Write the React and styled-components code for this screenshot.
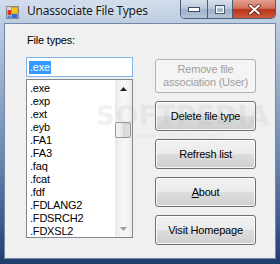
import React from "react";
import styled, { createGlobalStyle } from "styled-components";

const Global = createGlobalStyle`
  html, body { margin: 0; padding: 0; }
  body { width: 280px; height: 264px; overflow: hidden; background: #1f3c6d; }
`;

const Window = styled.div`
  position: relative;
  width: 280px;
  height: 264px;
  display: flex;
  flex-direction: column;
  box-sizing: border-box;
  background: linear-gradient(180deg, #d2deed 0%, #bccbe0 9%, #98aecb 30%, #6a87b0 60%, #3a5a8c 85%, #1f3c6d 100%);
  font-family: "Liberation Sans", Arial, sans-serif;
`;

const TitleBar = styled.div`
  height: 23px;
  display: flex;
  align-items: flex-start;
  padding-left: 6px;
  box-sizing: border-box;
`;

const AppIcon = styled.svg`
  margin-top: 6px;
  flex: none;
`;

const Title = styled.div`
  margin-left: 8px;
  margin-top: 3px;
  font-family: "Noto Sans", "Open Sans", sans-serif;
  font-size: 12px;
  line-height: 16px;
  color: #1a1a1a;
  letter-spacing: -0.25px;
  text-shadow: 0 0 6px rgba(255, 255, 255, 0.9);
`;

const Caption = styled.div`
  margin-left: auto;
  margin-right: 4px;
  display: flex;
  height: 19px;
  border: 1px solid #4a5d78;
  border-top: none;
  border-radius: 0 0 5px 5px;
  overflow: hidden;
  box-sizing: border-box;
`;

const CapButton = styled.div`
  width: ${(p) => p.w}px;
  height: 100%;
  display: flex;
  align-items: center;
  justify-content: center;
  box-sizing: border-box;
  border-left: ${(p) => (p.first ? "none" : "1px solid #4a5d78")};
  background: ${(p) =>
    p.close
      ? "linear-gradient(180deg, #e2a08f 0%, #d0735c 45%, #b8331c 55%, #cf5a3c 100%)"
      : "linear-gradient(180deg, #d7e0ec 0%, #bccadc 45%, #9fb1c9 55%, #b6c6da 100%)"};
`;

const Client = styled.div`
  flex: 1;
  margin: 0 4px 5px 4px;
  background: #f0f0f0;
  border: 1px solid #7288a8;
  box-sizing: border-box;
  display: flex;
  padding: 10px 0 0 21px;
  letter-spacing: -0.2px;
`;

const LeftColumn = styled.div`
  width: 107px;
  display: flex;
  flex-direction: column;
`;

const Label = styled.div`
  font-size: 11px;
  line-height: 13px;
  height: 13px;
  color: #000;
  padding-left: 1px;
`;

const TextBox = styled.div`
  margin-top: 10px;
  height: 20px;
  border: 1px solid #7eb4ea;
  background: #fff;
  box-sizing: border-box;
  display: flex;
  align-items: center;
  padding-left: 2px;
`;

const Selected = styled.span`
  background: #3399ff;
  color: #fff;
  font-size: 11px;
  line-height: 13px;
  padding: 0 1px;
`;

const ListBox = styled.div`
  margin-top: 2px;
  height: 159px;
  border: 1px solid #828790;
  background: #fff;
  box-sizing: border-box;
  display: flex;
`;

const Items = styled.div`
  flex: 1;
  padding: 2px 0 0 3px;
  overflow: hidden;
`;

const Item = styled.div`
  font-size: 11px;
  line-height: 13px;
  height: 13px;
  color: #000;
`;

const ScrollBar = styled.div`
  width: 17px;
  display: flex;
  flex-direction: column;
  background: linear-gradient(90deg, #e8e8e8 0%, #f6f6f6 40%, #f6f6f6 70%, #ebebeb 100%);
`;

const Arrow = styled.div`
  height: 17px;
  display: flex;
  align-items: center;
  justify-content: center;
`;

const Track = styled.div`
  flex: 1;
  display: flex;
  flex-direction: column;
`;

const Thumb = styled.div`
  margin: 25px 1px 0 0;
  height: 16px;
  border: 1px solid #969696;
  border-radius: 2px;
  box-sizing: border-box;
  background: linear-gradient(90deg, #f3f3f3 0%, #e8e8e8 50%, #d6d6d6 51%, #e0e0e0 100%);
`;

const RightColumn = styled.div`
  margin-left: 22px;
  width: 101px;
  padding-top: 25px;
  display: flex;
  flex-direction: column;
  gap: 8px;
`;

const Button = styled.div`
  height: ${(p) => p.h || 30}px;
  box-sizing: border-box;
  border: 1px solid ${(p) => (p.disabled ? "#adb2b5" : "#707070")};
  border-radius: 3px;
  display: flex;
  flex-direction: column;
  align-items: center;
  justify-content: center;
  text-align: center;
  font-size: 11px;
  line-height: 13px;
  color: ${(p) => (p.disabled ? "#a0a0a0" : "#000")};
  background: ${(p) =>
    p.disabled
      ? "#f4f4f4"
      : "linear-gradient(180deg, #f2f2f2 0%, #ebebeb 50%, #dddddd 51%, #cfcfcf 100%)"};
  box-shadow: ${(p) => (p.disabled ? "none" : "inset 0 0 0 1px rgba(255,255,255,0.8)")};
`;

const Key = styled.span`
  text-decoration: underline;
`;

const Watermark = styled.div`
  position: absolute;
  left: 96px;
  top: 104px;
  width: 150px;
  text-align: center;
  pointer-events: none;
  color: rgba(170, 170, 170, 0.18);
  font-family: "DejaVu Sans", sans-serif;
`;

const WaterBig = styled.div`
  font-size: 26px;
  font-weight: bold;
  line-height: 24px;
  letter-spacing: 1px;
`;

const WaterSmall = styled.div`
  font-size: 9px;
  line-height: 11px;
  margin-top: 3px;
  margin-left: 14px;
`;

const files = [".exe", ".exp", ".ext", ".eyb", ".FA1", ".FA3", ".faq", ".fcat", ".fdf", ".FDLANG2", ".FDSRCH2", ".FDXSL2"];

export default function App() {
  return (
    <>
      <Global />
      <Window>
        <TitleBar>
          <AppIcon width="13" height="13" viewBox="0 0 13 13">
            <rect x="0.5" y="0.5" width="12" height="12" fill="#d8d8d8" stroke="#8a8a8a" />
            <rect x="1.5" y="4" width="3.5" height="5" fill="#d83a20" />
            <rect x="5.5" y="1.5" width="6" height="6" fill="#f5c518" stroke="#c08a00" strokeWidth="0.6" />
            <rect x="5.5" y="8" width="6" height="4" fill="#2f6fd0" />
            <rect x="1.5" y="9.5" width="3.5" height="2.5" fill="#4a8de0" />
          </AppIcon>
          <Title>Unassociate File Types</Title>
          <Caption>
            <CapButton w={26} first>
              <svg width="12" height="5" viewBox="0 0 12 5">
                <rect x="0.5" y="0.5" width="11" height="4" fill="#fff" stroke="#3b4b62" />
              </svg>
            </CapButton>
            <CapButton w={25}>
              <svg width="10" height="9" viewBox="0 0 10 9">
                <rect x="0.5" y="0.5" width="9" height="8" fill="none" stroke="#3b4b62" />
                <rect x="1.5" y="2" width="7" height="5.5" fill="none" stroke="#fff" strokeWidth="1.2" />
              </svg>
            </CapButton>
            <CapButton w={43} close>
              <svg width="13" height="11" viewBox="0 0 13 11">
                <path d="M2 1.5 L11 9.5 M11 1.5 L2 9.5" stroke="#5a1a10" strokeWidth="3.6" strokeLinecap="round" />
                <path d="M2 1.5 L11 9.5 M11 1.5 L2 9.5" stroke="#fff" strokeWidth="2" strokeLinecap="round" />
              </svg>
            </CapButton>
          </Caption>
        </TitleBar>
        <Client>
          <LeftColumn>
            <Label>File types:</Label>
            <TextBox>
              <Selected>.exe</Selected>
            </TextBox>
            <ListBox>
              <Items>
                {files.map((f) => (
                  <Item key={f}>{f}</Item>
                ))}
              </Items>
              <ScrollBar>
                <Arrow>
                  <svg width="7" height="4" viewBox="0 0 7 4">
                    <path d="M0 4 L3.5 0 L7 4 Z" fill="#202020" />
                  </svg>
                </Arrow>
                <Track>
                  <Thumb />
                </Track>
                <Arrow>
                  <svg width="7" height="4" viewBox="0 0 7 4">
                    <path d="M0 0 L7 0 L3.5 4 Z" fill="#a0a0a0" />
                  </svg>
                </Arrow>
              </ScrollBar>
            </ListBox>
          </LeftColumn>
          <RightColumn>
            <Button disabled h={34}>
              <span>Remove file</span>
              <span>association (User)</span>
            </Button>
            <Button>Delete file type</Button>
            <Button>Refresh list</Button>
            <Button>
              <span>
                <Key>A</Key>bout
              </span>
            </Button>
            <Button>Visit Homepage</Button>
          </RightColumn>
        </Client>
        <Watermark>
          <WaterBig>SOFTPEDIA</WaterBig>
          <WaterSmall>www.softpedia.com</WaterSmall>
        </Watermark>
      </Window>
    </>
  );
}
